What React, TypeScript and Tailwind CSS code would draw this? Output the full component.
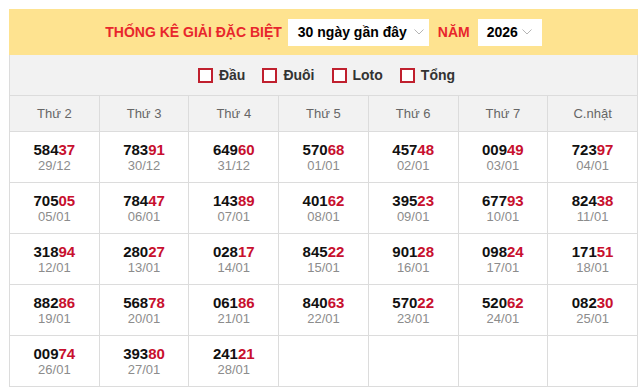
import React from "react";

type Cell = { num: string; date: string } | null;

const rows: Cell[][] = [
  [
    { num: "58437", date: "29/12" },
    { num: "78391", date: "30/12" },
    { num: "64960", date: "31/12" },
    { num: "57068", date: "01/01" },
    { num: "45748", date: "02/01" },
    { num: "00949", date: "03/01" },
    { num: "72397", date: "04/01" },
  ],
  [
    { num: "70505", date: "05/01" },
    { num: "78447", date: "06/01" },
    { num: "14389", date: "07/01" },
    { num: "40162", date: "08/01" },
    { num: "39523", date: "09/01" },
    { num: "67793", date: "10/01" },
    { num: "82438", date: "11/01" },
  ],
  [
    { num: "31894", date: "12/01" },
    { num: "28027", date: "13/01" },
    { num: "02817", date: "14/01" },
    { num: "84522", date: "15/01" },
    { num: "90128", date: "16/01" },
    { num: "09824", date: "17/01" },
    { num: "17151", date: "18/01" },
  ],
  [
    { num: "88286", date: "19/01" },
    { num: "56878", date: "20/01" },
    { num: "06186", date: "21/01" },
    { num: "84063", date: "22/01" },
    { num: "57022", date: "23/01" },
    { num: "52062", date: "24/01" },
    { num: "08230", date: "25/01" },
  ],
  [
    { num: "00974", date: "26/01" },
    { num: "39380", date: "27/01" },
    { num: "24121", date: "28/01" },
    null,
    null,
    null,
    null,
  ],
];

const days = ["Thứ 2", "Thứ 3", "Thứ 4", "Thứ 5", "Thứ 6", "Thứ 7", "C.nhật"];
const filters = ["Đầu", "Đuôi", "Loto", "Tổng"];

function Chevron() {
  return (
    <svg width="10" height="6" viewBox="0 0 10 6" className="shrink-0">
      <path d="M0.5 0.5 L5 5 L9.5 0.5" fill="none" stroke="#b5b5b5" strokeWidth="1" />
    </svg>
  );
}

export default function App() {
  return (
    <div
      className="pt-[9px] pl-[9px] w-[643px] h-[390px] bg-white"
      style={{ fontFamily: '"Liberation Sans", Arial, sans-serif' }}
    >
      <div className="w-[629px]">
        {/* tiêu đề + chọn khoảng thời gian */}
        <div className="h-[46px] bg-[#fee390] flex items-center justify-center">
          <span className="text-[14px] font-bold text-[#e8262c] mr-[6px]">THỐNG KÊ GIẢI ĐẶC BIỆT</span>
          <div className="h-[27px] w-[141px] bg-white flex items-center justify-between pl-[10px] pr-[5px]">
            <span className="text-[14px] font-bold text-black">30 ngày gần đây</span>
            <Chevron />
          </div>
          <span className="text-[14px] font-bold text-[#e8262c] ml-[9px] mr-[8px]">NĂM</span>
          <div className="h-[27px] w-[64px] bg-white flex items-center justify-between pl-[9px] pr-[10px]">
            <span className="text-[14px] font-bold text-black">2026</span>
            <Chevron />
          </div>
        </div>

        {/* bộ lọc */}
        <div className="h-[40px] bg-[#f2f2f2] border-l border-r border-[#dcdcdc] flex items-center justify-center gap-[17px] pl-[6px]">
          {filters.map((f) => (
            <label key={f} className="flex items-center gap-[6px] cursor-pointer">
              <span className="w-[15px] h-[15px] border-2 border-[#c0202e] bg-white inline-block" />
              <span className="text-[14px] font-bold text-[#333]">{f}</span>
            </label>
          ))}
        </div>

        <table className="w-full table-fixed border-collapse">
          <thead>
            <tr className="h-[36px] bg-[#f2f2f2]">
              {days.map((d) => (
                <th key={d} className="border border-[#dcdcdc] text-[13px] font-normal text-[#666]">
                  {d}
                </th>
              ))}
            </tr>
          </thead>
          <tbody>
            {rows.map((row, i) => (
              <tr key={i} className="h-[51px]">
                {row.map((c, j) => (
                  <td key={j} className="border border-[#dcdcdc] text-center align-middle pb-[1px]">
                    {c && (
                      <>
                        <div className="text-[15px] font-bold leading-[17px] text-[#111]">
                          {c.num.slice(0, 3)}
                          <span className="text-[#c8102e]">{c.num.slice(3)}</span>
                        </div>
                        <div className="text-[13px] leading-[15px] text-[#8c8c8c]">{c.date}</div>
                      </>
                    )}
                  </td>
                ))}
              </tr>
            ))}
          </tbody>
        </table>
      </div>
    </div>
  );
}
